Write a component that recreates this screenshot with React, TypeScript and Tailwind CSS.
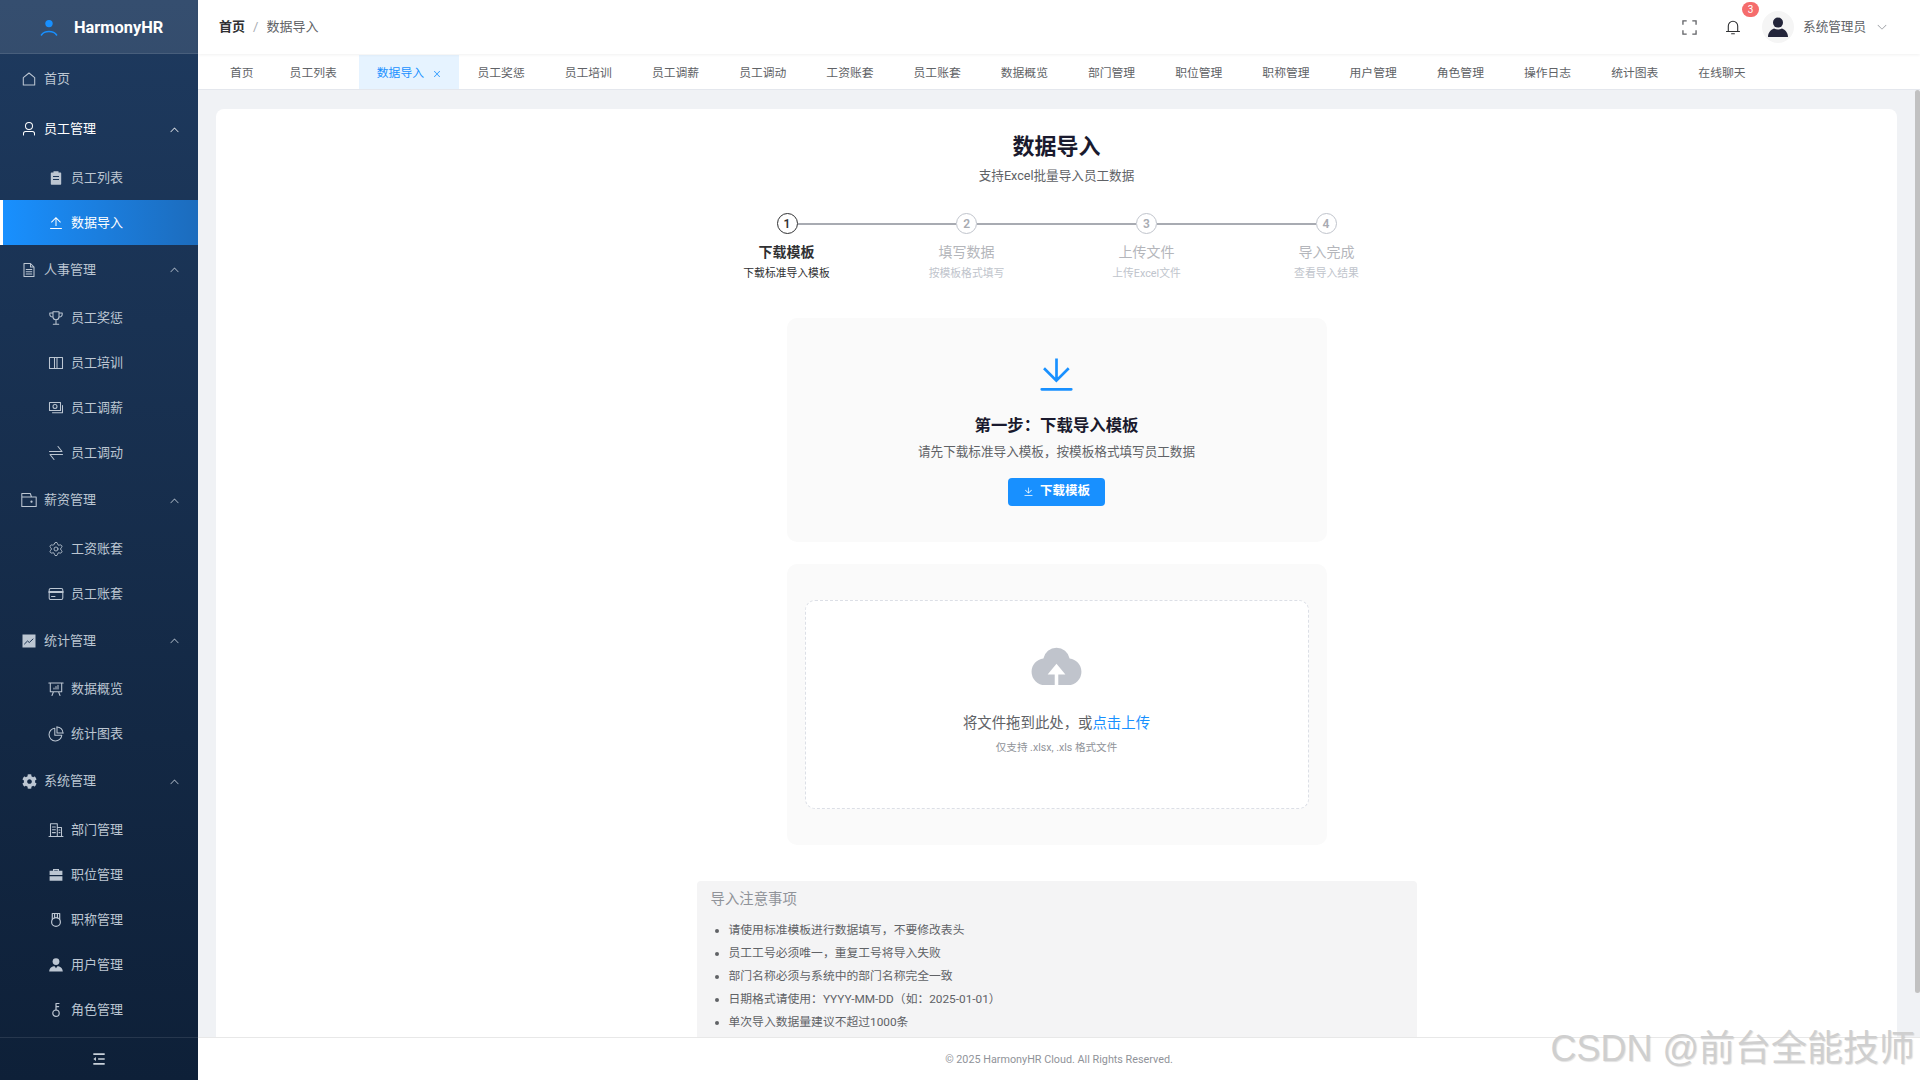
import React from "react";
import { FaCog } from "react-icons/fa";
import { Settings } from "lucide-react";

type IP = { size?: number; className?: string };
const Ep = ({ d, size = 14, className = "" }: IP & { d: string }) => (
  <svg viewBox="0 0 1024 1024" width={size} height={size} fill="currentColor" className={"shrink-0 " + className}>
    <path d={d} />
  </svg>
);
const S = ({ size = 16, className = "", children }: IP & { children: React.ReactNode }) => (
  <svg viewBox="0 0 16 16" width={size} height={size} fill="none" stroke="currentColor" strokeWidth={1.05} strokeLinecap="round" strokeLinejoin="round" className={"shrink-0 " + className}>
    {children}
  </svg>
);

const P = {
  user: "M512 512a192 192 0 1 0 0-384 192 192 0 0 0 0 384m0 64a256 256 0 1 1 0-512 256 256 0 0 1 0 512m320 320v-96a96 96 0 0 0-96-96H288a96 96 0 0 0-96 96v96a32 32 0 1 1-64 0v-96a160 160 0 0 1 160-160h448a160 160 0 0 1 160 160v96a32 32 0 1 1-64 0",
  upload: "M160 832h704a32 32 0 1 1 0 64H160a32 32 0 1 1 0-64m384-578.304V704h-64V247.296L237.248 490.048 192 444.8 508.8 128l316.8 316.8-45.312 45.248z",
  download: "M160 832h704a32 32 0 1 1 0 64H160a32 32 0 1 1 0-64m384-253.696 236.288-236.352 45.248 45.248L508.8 704 192 387.2l45.248-45.248L480 584.704V128h64z",
  cloud: "M544 864V672h128L512 480 352 672h128v192H320v-1.6c-5.376.32-10.496 1.6-16 1.6A240 240 0 0 1 64 624c0-123.136 93.12-223.488 212.608-237.248A239.808 239.808 0 0 1 512 192a239.872 239.872 0 0 1 235.456 194.752c119.488 13.76 212.48 114.112 212.48 237.248a240 240 0 0 1-240 240c-5.376 0-10.56-1.28-16-1.6v1.6z",
  up: "M488.832 344.32l-339.84 356.672a32 32 0 0 0 0 44.16l.384.384a29.44 29.44 0 0 0 42.688 0l320-335.872 319.872 335.872a29.44 29.44 0 0 0 42.688 0l.384-.384a32 32 0 0 0 0-44.16L535.168 344.32a32 32 0 0 0-46.336 0",
  down: "M831.872 340.864 512 652.672 192.128 340.864a30.592 30.592 0 0 0-42.752 0 29.12 29.12 0 0 0 0 41.6L489.664 714.24a32 32 0 0 0 44.672 0l340.288-331.712a29.12 29.12 0 0 0 0-41.728 30.592 30.592 0 0 0-42.752 0z",
  close: "M764.288 214.592 512 466.88 259.712 214.592a31.936 31.936 0 0 0-45.12 45.12L466.752 512 214.528 764.224a31.936 31.936 0 1 0 45.12 45.184L512 557.184l252.288 252.288a31.936 31.936 0 0 0 45.12-45.12L557.12 512.064l252.288-252.352a31.936 31.936 0 1 0-45.12-45.184z",
};

const icons: Record<string, React.ReactNode> = {
  home: (
    <S>
      <path d="M8 2 2.3 6.6V14h11.4V6.6z" />
    </S>
  ),
  user: <Ep d={P.user} size={16} />,
  list: (
    <S>
      <path stroke="none" fill="currentColor" fillRule="evenodd" d="M3.5 2.5h2V1.3h5v1.2h2a.7.7 0 0 1 .7.7v10.8a.7.7 0 0 1-.7.7h-9a.7.7 0 0 1-.7-.7V3.2a.7.7 0 0 1 .7-.7zM5 6v1h6V6zm0 3v1h6V9z" />
    </S>
  ),
  up: <Ep d={P.upload} size={16} />,
  doc: (
    <S>
      <path d="M3 1.5h6.5l3.5 3.5v9.5H3zM9.5 1.5V5H13M5.2 7.5h5.6M5.2 9.8h5.6M5.2 12h5.6" />
    </S>
  ),
  trophy: (
    <S>
      <path d="M5 1.8h6v5a3 3 0 0 1-6 0zM5 3H1.8v1.2A2.8 2.8 0 0 0 5 7M11 3h3.2v1.2A2.8 2.8 0 0 1 11 7M8 9.8v4.2M5.3 14.3h5.4" />
    </S>
  ),
  book: (
    <S>
      <path d="M1.5 2.5h13v11h-13zM6.5 2.5v11M9 2.5v11" />
    </S>
  ),
  money: (
    <S>
      <path d="M1.5 2.5h11v8h-11zM4.5 12.8h10V5.5" />
      <circle cx="7" cy="6.5" r="2" />
    </S>
  ),
  swap: (
    <S>
      <path d="M1.5 6.5h12.5L10 1.5M14.5 9.5H2l4 5" />
    </S>
  ),
  wallet: (
    <S>
      <path d="M.8 5h14.4v9.5H.8zM.8 5V1.5h8.5L10.5 5" />
      <circle cx="10.5" cy="9.7" r=".6" fill="currentColor" />
    </S>
  ),
  gear: <Settings size={16} strokeWidth={1.3} />,
  card: (
    <S>
      <rect x="1.2" y="2.5" width="13.6" height="11" rx="1.5" />
      <path d="M1.2 6h13.6" strokeWidth={1.8} />
      <path d="M3.5 10.5h3.5" />
    </S>
  ),
  trend: (
    <S>
      <rect x="1.5" y="1.5" width="13" height="13" fill="currentColor" stroke="none" />
      <path d="M3.5 11l3-3 1.8 1.5 3.7-3.5" stroke="#1a3251" strokeWidth={1} />
    </S>
  ),
  board: (
    <S>
      <path d="M.8 2h14.4M2.3 2v8.7h11.4V2M5.5 10.7 4 14.5M10.5 10.7l1.5 3.8M6 8V7M8 8V5.5M10 8V4.3" />
    </S>
  ),
  pie: (
    <S>
      <path d="M6.8 2.2a6.4 6.4 0 1 0 7 7H6.8zM9 .9a6.2 6.2 0 0 1 6 6" />
      <path d="M9 .9v6h6" />
    </S>
  ),
  cog: <FaCog size={15} />,
  office: (
    <S>
      <path d="M2.5 14.2V1.8h6.8v12.4M9.3 5.5h4.2v8.7M1 14.4h14M4.4 5h3M4.4 7.8h3M4.4 10.6h3M11 8h1M11 10.6h1" />
    </S>
  ),
  case: (
    <S>
      <path stroke="none" fill="currentColor" fillRule="evenodd" d="M5 3.8V2h6v1.8h3.4V8H1.6V3.8zM6.2 3.2v.6h3.6v-.6zM1.6 9.2h12.8v4.6H1.6z" />
    </S>
  ),
  medal: (
    <S>
      <circle cx="8" cy="10" r="4.4" strokeWidth={1.2} />
      <path d="M4.3 7.3V1.5h7.4v5.8M6.6 1.5v4.4M9.4 1.5v4.4" strokeWidth={1.2} />
    </S>
  ),
  ufill: (
    <S>
      <circle cx="8" cy="4.6" r="3.4" fill="currentColor" stroke="none" />
      <path stroke="none" fill="currentColor" d="M1.2 14.6c0-3.6 3-5.4 5.4-5.4L8 11.2l1.4-2c2.4 0 5.4 1.8 5.4 5.4z" />
    </S>
  ),
  key: (
    <S>
      <circle cx="8" cy="11.2" r="3.2" strokeWidth={1.2} />
      <path d="M8 8V1.5h3M8 4.6h2.6" strokeWidth={1.2} />
    </S>
  ),
};

type Group = { title: string; icon: string; open?: boolean; items: [string, string, boolean?][] };
const groups: Group[] = [
  { title: "员工管理", icon: "user", open: true, items: [["员工列表", "list"], ["数据导入", "up", true]] },
  { title: "人事管理", icon: "doc", items: [["员工奖惩", "trophy"], ["员工培训", "book"], ["员工调薪", "money"], ["员工调动", "swap"]] },
  { title: "薪资管理", icon: "wallet", items: [["工资账套", "gear"], ["员工账套", "card"]] },
  { title: "统计管理", icon: "trend", items: [["数据概览", "board"], ["统计图表", "pie"]] },
  { title: "系统管理", icon: "cog", items: [["部门管理", "office"], ["职位管理", "case"], ["职称管理", "medal"], ["用户管理", "ufill"], ["角色管理", "key"]] },
];

const tabs = ["首页", "员工列表", "数据导入", "员工奖惩", "员工培训", "员工调薪", "员工调动", "工资账套", "员工账套", "数据概览", "部门管理", "职位管理", "职称管理", "用户管理", "角色管理", "操作日志", "统计图表", "在线聊天"];

const steps = [
  ["下载模板", "下载标准导入模板"],
  ["填写数据", "按模板格式填写"],
  ["上传文件", "上传Excel文件"],
  ["导入完成", "查看导入结果"],
];

const notes = ["请使用标准模板进行数据填写，不要修改表头", "员工工号必须唯一，重复工号将导入失败", "部门名称必须与系统中的部门名称完全一致", "日期格式请使用：YYYY-MM-DD（如：2025-01-01）", "单次导入数据量建议不超过1000条"];

function Sidebar() {
  return (
    <aside className="w-[198px] shrink-0 h-full flex flex-col bg-gradient-to-b from-[#1e3a5f] to-[#0e2038] text-[#bcc6d2]">
      <div className="h-[54px] shrink-0 flex items-center bg-white/10 border-b border-white/10">
        <svg viewBox="0 0 24 24" width="24" height="24" className="ml-[37px] shrink-0 text-[#1890ff]" fill="none">
          <circle cx="12" cy="8.6" r="3.7" fill="currentColor" />
          <path d="M4.4 20c1.6-2.6 4.4-3.6 7.6-3.6s6 1 7.6 3.6" stroke="currentColor" strokeWidth="1.5" strokeLinecap="round" />
        </svg>
        <span className="ml-[13px] pt-[3px] text-[16.4px] font-bold text-white leading-none">HarmonyHR</span>
      </div>
      <nav className="flex-1 overflow-hidden pt-px text-[13px]">
        <div className="h-[48px] flex items-center pl-[21px]">
          {icons.home}
          <span className="ml-[7px]">首页</span>
        </div>
        {groups.map((g, i) => (
          <div key={g.title} className={i === 0 ? "mt-[2px]" : "mt-[0.5px]"}>
            <div className={"h-[48px] flex items-center pl-[21px] pr-[18px] " + (g.open ? "text-white" : "")}>
              <span className="w-[16px] flex justify-center">{icons[g.icon]}</span>
              <span className="ml-[7px] flex-1">{g.title}</span>
              <Ep d={P.up} size={11} />
            </div>
            <div className="mt-[2px]">
              {g.items.map(([t, ic, active]) =>
                active ? (
                  <div key={t} className="h-[45px] flex items-center pl-[45px] border-l-[3px] border-white bg-gradient-to-r from-[#1890ff] to-[#1c6cbd] text-white">
                    <span className="w-[16px] flex justify-center">{icons[ic]}</span>
                    <span className="ml-[7px]">{t}</span>
                  </div>
                ) : (
                  <div key={t} className="h-[45px] flex items-center pl-[48px]">
                    <span className="w-[16px] flex justify-center">{icons[ic]}</span>
                    <span className="ml-[7px]">{t}</span>
                  </div>
                )
              )}
            </div>
          </div>
        ))}
      </nav>
      <div className="h-[43px] shrink-0 border-t border-white/10 flex items-center justify-center text-[#c9d1da]">
        <S size={14}>
          <path d="M1.5 2.5h13M7 8h7.5M1.5 13.5h13" strokeWidth={1.9} strokeLinecap="butt" />
          <path d="M4.5 5.8 1.6 8l2.9 2.2z" fill="currentColor" stroke="none" />
        </S>
      </div>
    </aside>
  );
}

function Header() {
  return (
    <header className="h-[54px] shrink-0 bg-white flex items-center pl-[21px] relative z-10 shadow-[0_1px_3px_rgba(0,0,0,0.06)]">
      <span className="text-[13px] font-semibold text-[#303133]">首页</span>
      <span className="mx-[8px] text-[13px] text-[#a8abb2]">/</span>
      <span className="text-[13px] text-[#606266]">数据导入</span>
      <div className="ml-auto flex items-center">
        <svg viewBox="0 0 16 16" width="15" height="15" fill="none" stroke="#606266" strokeWidth="1.4" className="shrink-0">
          <path d="M1 5V1h4M11 1h4v4M15 11v4h-4M5 15H1v-4" />
        </svg>
        <span className="relative ml-[28px] w-[16px] h-[16px] text-[#303133]">
          <svg viewBox="0 0 16 16" width="16" height="16" fill="none" stroke="currentColor" strokeWidth="1.1">
            <path d="M1.5 12.5h13M3.3 12.5V7a4.7 4.7 0 0 1 9.4 0v5.5M6.6 14.8h2.8" strokeLinecap="round" />
          </svg>
          <span className="absolute left-[17px] top-[-17.5px] w-[17px] h-[15px] rounded-full bg-[#f56c6c] text-white text-[10px] leading-[15px] text-center">3</span>
        </span>
        <span className="ml-[21px] w-[32px] h-[32px] rounded-full bg-[#f5f5f5] flex items-center justify-center">
          <svg viewBox="0 0 24 24" width="24" height="24" fill="#23253a">
            <circle cx="12" cy="7.6" r="5" />
            <path d="M2 22c0-5 3.5-7.5 6-8.5 2.4 1.3 5.6 1.3 8 0 2.5 1 6 3.5 6 8.5z" />
          </svg>
        </span>
        <span className="ml-[9px] text-[12.6px] text-[#606266]">系统管理员</span>
        <Ep d={P.down} size={12} className="ml-[10px] mr-[32px] text-[#909399]" />
      </div>
    </header>
  );
}

function Tabs() {
  return (
    <div className="h-[36px] shrink-0 bg-white border-b border-[#e4e7ed] flex items-stretch pt-px pl-[14px] text-[11.8px] text-[#606266]">
      {tabs.map((t, i) => {
        const active = t === "数据导入";
        return (
          <div
            key={t}
            className={
              "flex items-center pt-[3px] " +
              (active ? "bg-[#e6f3ff] text-[#1890ff] pl-[18px] pr-[17px] ml-[4px] mr-[0.5px]" : i < 2 ? "px-[18px]" : "px-[18px] mr-[4px]")
            }
          >
            <span>{t}</span>
            {active && <Ep d={P.close} size={10} className="ml-[7.5px] mr-[0.5px]" />}
          </div>
        );
      })}
    </div>
  );
}

function Content() {
  return (
    <div className="relative flex-1 min-h-0">
      <div className="h-full overflow-hidden bg-[#f0f2f5] pl-[18px] pr-[23px] pt-[19px]">
        <div className="bg-white rounded-[8px] pt-[23px] pb-[22px]">
          <h1 className="text-[22px] leading-[30px] font-bold text-[#1a1a2e] text-center">数据导入</h1>
          <p className="mt-[4px] text-[12.6px] leading-[20px] text-[#606266] text-center">支持Excel批量导入员工数据</p>

          <div className="w-[720px] mx-auto mt-[27px]">
            <div className="mx-[80px] flex items-center">
              {steps.map((s, i) => (
                <React.Fragment key={s[0]}>
                  {i > 0 && <div className="flex-1 h-[2px] bg-[#a8abb2]" />}
                  <div className={"w-[21px] h-[21px] rounded-full border-[1.5px] flex items-center justify-center text-[12px] font-semibold shrink-0 bg-white " + (i === 0 ? "border-[#303133] text-[#303133]" : "border-[#c0c4cc] text-[#a8abb2]")}>
                    {i + 1}
                  </div>
                </React.Fragment>
              ))}
            </div>
            <div className="grid grid-cols-4 mt-[8px] text-center">
              {steps.map((s, i) => (
                <div key={s[0]}>
                  <div className={"text-[14px] leading-[20px] " + (i === 0 ? "font-semibold text-[#303133]" : "text-[#b4b6bb]")}>{s[0]}</div>
                  <div className={"mt-[4px] text-[10.8px] leading-[16px] " + (i === 0 ? "text-[#303133]" : "text-[#c0c4cc]")}>{s[1]}</div>
                </div>
              ))}
            </div>
          </div>

          <section className="w-[540px] mx-auto mt-[35.5px] bg-[#fafafa] rounded-[10px] pt-[35px] pb-[36px] flex flex-col items-center">
            <Ep d={P.download} size={43} className="text-[#1890ff]" />
            <h2 className="mt-[18px] text-[16.4px] leading-[24px] font-semibold text-[#1a1a2e]">第一步：下载导入模板</h2>
            <p className="mt-[4.5px] text-[12.6px] leading-[20px] text-[#606266]">请先下载标准导入模板，按模板格式填写员工数据</p>
            <button className="mt-[15.5px] w-[97px] h-[28px] rounded-[4px] bg-[#1890ff] text-white text-[12.5px] font-semibold flex items-center justify-center">
              <Ep d={P.download} size={11} className="mr-[6px]" />
              下载模板
            </button>
          </section>

          <section className="w-[540px] mx-auto mt-[22px] bg-[#fafafa] rounded-[10px] px-[18px] py-[36px]">
            <div className="h-[209px] bg-white rounded-[10px] border border-dashed border-[#dcdfe6] flex flex-col items-center pt-[36px]">
              <Ep d={P.cloud} size={57} className="text-[#c0c4cc]" />
              <p className="mt-[20px] text-[14.4px] leading-[20px] text-[#606266]">
                将文件拖到此处，或<span className="text-[#1890ff]">点击上传</span>
              </p>
              <p className="mt-[6px] text-[10.6px] leading-[16px] text-[#909399]">仅支持 .xlsx, .xls 格式文件</p>
            </div>
          </section>

          <section className="w-[720px] mx-auto mt-[36px] bg-[#f4f4f5] rounded-[4px] px-[14px] pt-[9.5px] pb-[8px]">
            <h3 className="text-[14.4px] leading-[20px] text-[#909399]">导入注意事项</h3>
            <ul className="mt-[8.5px] pl-[18px] list-disc text-[11.8px] leading-[23.2px] text-[#606266]">
              {notes.map((n) => (
                <li key={n}>{n}</li>
              ))}
            </ul>
          </section>
        </div>
      </div>
      <div className="absolute right-0 top-0 w-[5px] h-[903px] rounded-[3px] bg-[#c1c1c1]" />
    </div>
  );
}

export default function App() {
  return (
    <div className="relative w-screen h-screen overflow-hidden flex bg-white [font-family:'Roboto','Noto_Sans_CJK_SC',sans-serif]">
      <Sidebar />
      <main className="flex-1 min-w-0 h-full flex flex-col">
        <Header />
        <Tabs />
        <Content />
        <footer className="h-[43px] shrink-0 bg-white border-t border-[#e8e8e8] flex items-center justify-center pt-[1.5px] text-[10.8px] text-[#909399]">
          © 2025 HarmonyHR Cloud. All Rights Reserved.
        </footer>
      </main>
      <div className="absolute right-[5px] top-[1027px] text-[36px] leading-[44px] text-[#cfcfcf] [text-shadow:1px_1px_1px_rgba(0,0,0,0.12)] whitespace-nowrap [font-family:'Liberation_Sans','Noto_Sans_CJK_SC',sans-serif] pointer-events-none">
        CSDN @前台全能技师
      </div>
    </div>
  );
}
